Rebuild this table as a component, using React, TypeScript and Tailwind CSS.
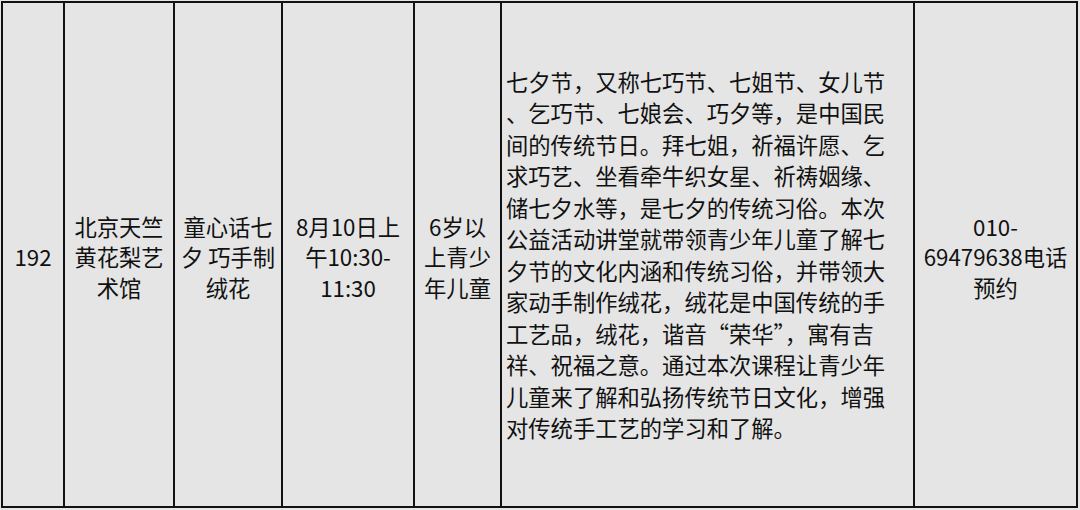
const cells: { lines: string[]; left?: boolean }[] = [
  { lines: ["192"] },
  { lines: ["北京天竺", "黄花梨艺", "术馆"] },
  { lines: ["童心话七", "夕 巧手制", "绒花"] },
  { lines: ["8月10日上", "午10:30-", "11:30"] },
  { lines: ["6岁以", "上青少", "年儿童"] },
  {
    left: true,
    lines: [
      "七夕节，又称七巧节、七姐节、女儿节",
      "、乞巧节、七娘会、巧夕等，是中国民",
      "间的传统节日。拜七姐，祈福许愿、乞",
      "求巧艺、坐看牵牛织女星、祈祷姻缘、",
      "储七夕水等，是七夕的传统习俗。本次",
      "公益活动讲堂就带领青少年儿童了解七",
      "夕节的文化内涵和传统习俗，并带领大",
      "家动手制作绒花，绒花是中国传统的手",
      "工艺品，绒花，谐音“荣华”，寓有吉",
      "祥、祝福之意。通过本次课程让青少年",
      "儿童来了解和弘扬传统节日文化，增强",
      "对传统手工艺的学习和了解。",
    ],
  },
  { lines: ["010-", "69479638电话", "预约"] },
];

export default function App() {
  return (
    <div className="w-[1080px] h-[510px] bg-[#e5e5e5] pt-[1px] pl-[1px] overflow-hidden">
      <div
        className="w-[1077px] h-[507px] border-2 border-[#111] grid grid-cols-[62px_110px_108px_132px_87px_413px_161px] text-[22.3px] text-[#111]"
        style={{ fontFamily: '"Noto Sans CJK SC", "Noto Sans", sans-serif' }}
      >
        {cells.map((cell, i) => (
          <div
            key={i}
            className={
              (i < cells.length - 1 ? "border-r-2 border-[#111] " : "") +
              "flex flex-col justify-center " +
              (cell.left
                ? "items-start pl-1 leading-[31.5px]"
                : "items-center text-center pt-1 leading-[30.5px]")
            }
          >
            {cell.lines.map((line, j) => (
              <span key={j} className="block whitespace-nowrap">
                {line}
              </span>
            ))}
          </div>
        ))}
      </div>
    </div>
  );
}
